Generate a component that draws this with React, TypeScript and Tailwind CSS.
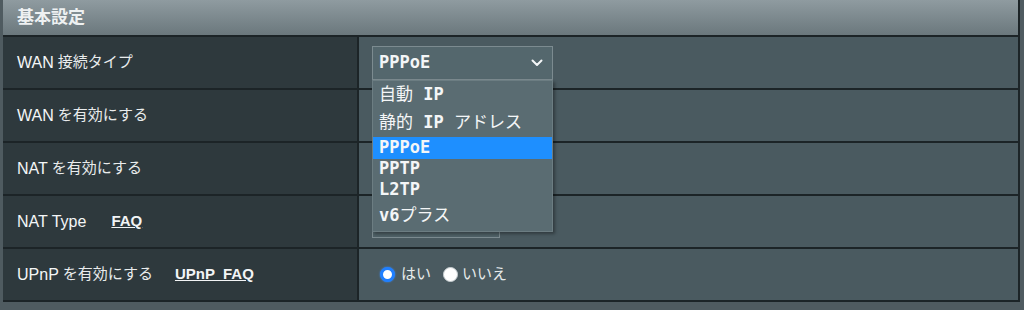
import React from "react";

const LABEL_FONT = {
  fontFamily: '"Liberation Sans", "Noto Sans CJK JP", sans-serif',
};
const MONO_FONT = {
  fontFamily: '"DejaVu Sans Mono", "Noto Sans CJK JP", monospace',
};

interface RowProps {
  en: string;
  ja?: string;
  link?: React.ReactNode;
  children?: React.ReactNode;
}

function Row({ en, ja, link, children }: RowProps) {
  return (
    <div className="flex h-[53px] border-b-2 border-[#1c2427]">
      <div className="w-[356px] shrink-0 bg-[#2e393d] border-r-2 border-[#1c2427] flex items-center pl-[14px] text-[#f4f6f7]">
        <span className="text-[16px]">{en}</span>
        {ja && <span className="ml-[4px] text-[15px] text-[#e9eced]">{ja}</span>}
        {link}
      </div>
      <div className="flex-1 bg-[#4a5a60] flex items-center pl-[13px]">
        {children}
      </div>
    </div>
  );
}

const options = [
  { h: "h-[27px]", node: <>自動 <b>IP</b></> },
  { h: "h-[29px]", node: <>静的 <b>IP</b> アドレス</> },
  { h: "h-[22px]", node: <b>PPPoE</b>, active: true },
  { h: "h-[20px]", node: <b>PPTP</b> },
  { h: "h-[21px]", node: <b>L2TP</b> },
  { h: "h-[31px]", node: <><b>v6</b>プラス</> },
];

function WanSelect() {
  return (
    <div className="relative w-[181px] h-[34px] border border-[#7c8b90] bg-[#54676d] flex items-center justify-between pl-[6px] pr-[9px]">
      <span className="text-[17px] font-bold text-[#f4f6f7]" style={MONO_FONT}>
        PPPoE
      </span>
      <svg width="12" height="8" viewBox="0 0 12 8" fill="none">
        <path d="M1.5 1.5 6 6l4.5-4.5" stroke="#f4f6f7" strokeWidth="2" strokeLinecap="round" strokeLinejoin="round" />
      </svg>

      {/* open list */}
      <div
        className="absolute z-10 left-[-1px] top-[33px] w-[181px] border border-[#6c7d82] bg-[#5a6c72] shadow-[2px_2px_3px_rgba(0,0,0,0.35)] text-[17px] text-[#f4f6f7]"
        style={MONO_FONT}
      >
        {options.map((o, i) => (
          <div
            key={i}
            className={`${o.h} flex items-center pl-[6px] leading-none whitespace-pre ${
              o.active ? "bg-[#1e8fff]" : ""
            }`}
          >
            {o.node}
          </div>
        ))}
      </div>
    </div>
  );
}

function Radio({ checked }: { checked?: boolean }) {
  return checked ? (
    <span className="w-[15px] h-[15px] rounded-full border-[3px] border-[#1f7fff] bg-white shadow-[0_0_2px_#3a8fff] inline-block" />
  ) : (
    <span className="w-[15px] h-[15px] rounded-full border border-[#c8cfd2] bg-white inline-block" />
  );
}

export default function App() {
  return (
    <div className="w-[1024px] h-[310px] bg-[#4f5b60] overflow-hidden" style={LABEL_FONT}>
      <div className="ml-[3px] w-[1017px] border-r-2 border-[#1c2427]">
        <div className="h-[37px] bg-gradient-to-b from-[#8f9ba0] to-[#6b787d] border-b-2 border-[#1c2427] flex items-center pl-[14px]">
          <span className="text-[17px] font-bold text-[#eef1f2]">基本設定</span>
        </div>

        <Row en="WAN" ja="接続タイプ">
          <WanSelect />
        </Row>
        <Row en="WAN" ja="を有効にする" />
        <Row en="NAT" ja="を有効にする" />
        <Row
          en="NAT Type"
          link={<a className="ml-[25px] text-[15px] font-bold underline text-[#f2f4f5]">FAQ</a>}
        >
          <div className="w-[128px] h-[32px] border border-[#7c8b90] bg-[#4f6167]" />
        </Row>
        <Row
          en="UPnP"
          ja="を有効にする"
          link={
            <a className="ml-[22px] text-[15px] font-bold underline text-[#f2f4f5] whitespace-pre">
              UPnP  FAQ
            </a>
          }
        >
          <div className="flex items-center ml-[8px] text-[15px] text-[#e6eaeb]">
            <Radio checked />
            <span className="ml-[6px]">はい</span>
            <span className="ml-[12px] flex items-center">
              <Radio />
            </span>
            <span className="ml-[4px]">いいえ</span>
          </div>
        </Row>
      </div>
    </div>
  );
}
